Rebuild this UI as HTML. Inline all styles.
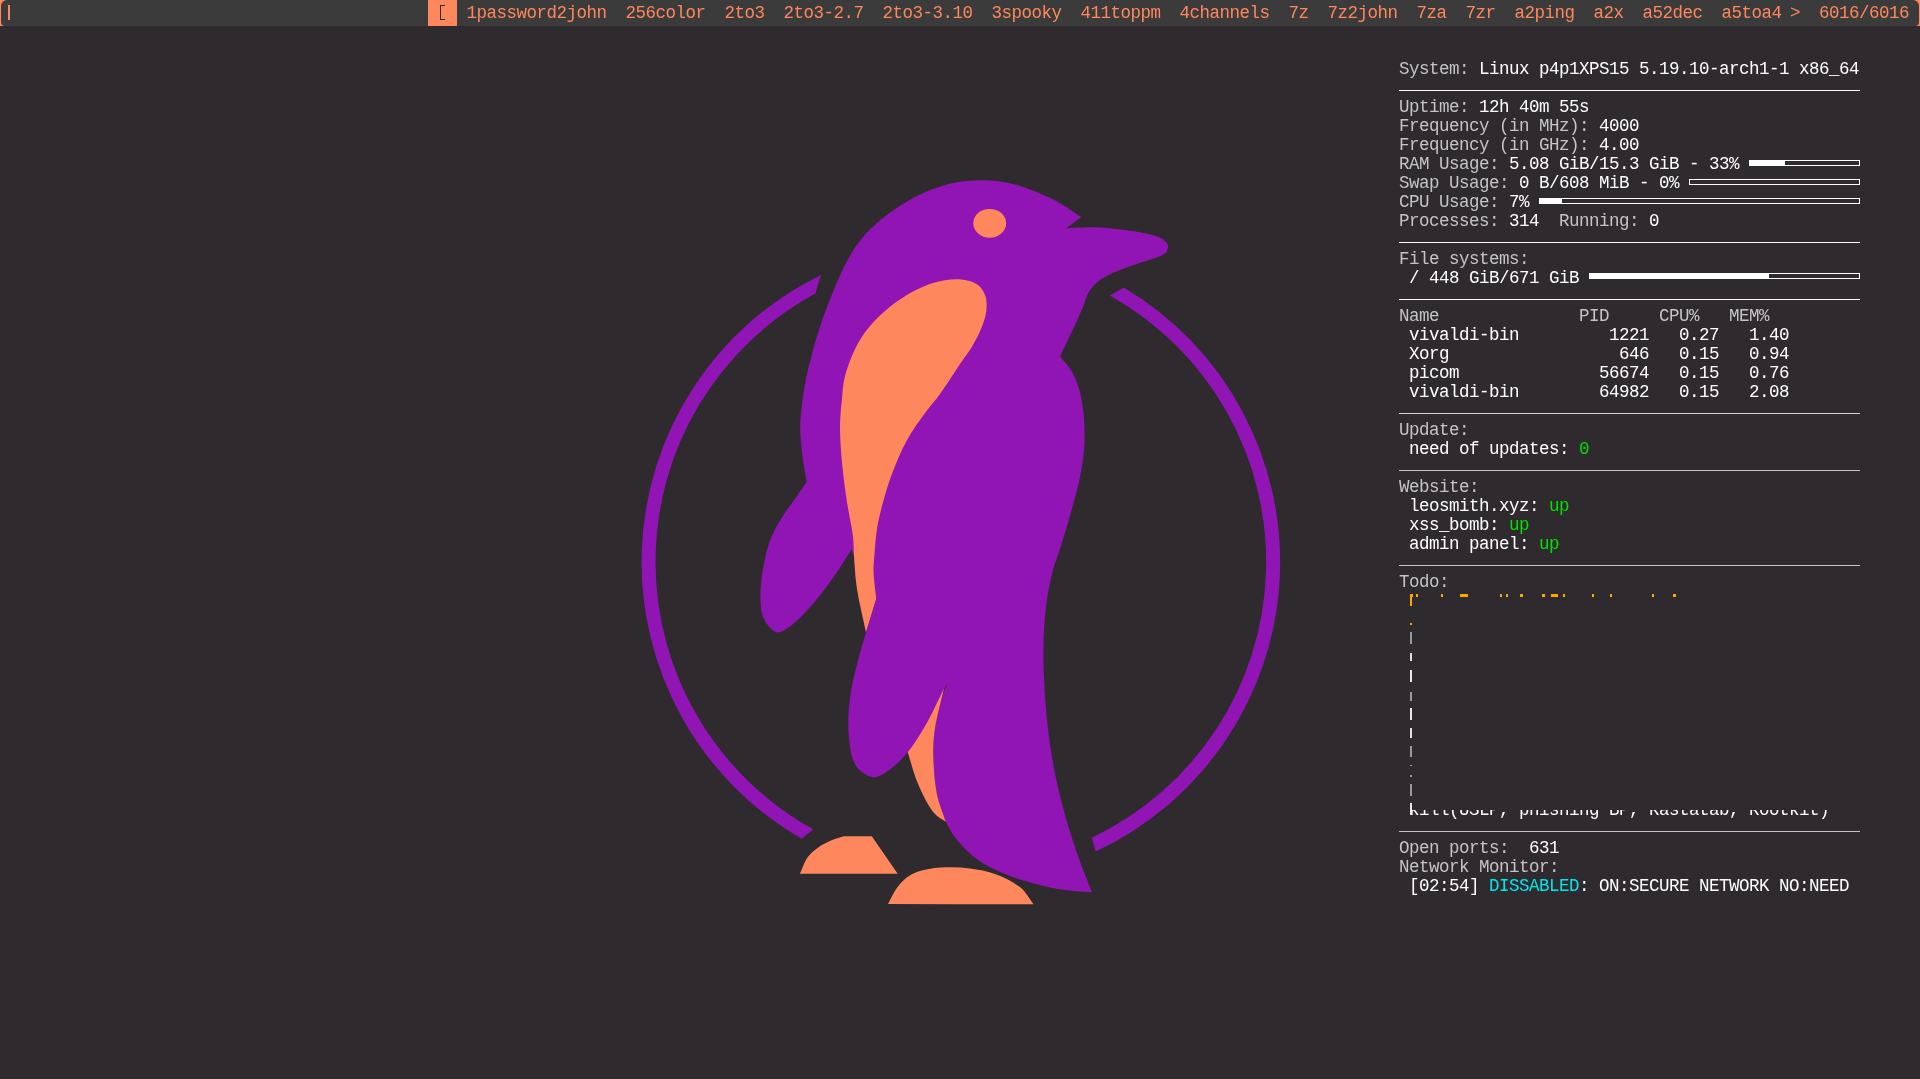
<!DOCTYPE html>
<html><head><meta charset="utf-8">
<style>
html,body{margin:0;padding:0;}
body{-webkit-font-smoothing:antialiased;width:1920px;height:1079px;background:#2e2a2e;position:relative;overflow:hidden;font-family:"Liberation Mono",monospace;}
#barbg{position:absolute;left:0;top:0;width:1920px;height:26px;background:#ff875d;}
#bar{position:absolute;left:1px;top:0;width:1918px;height:26px;background:#3b3b3b;border-radius:6px 6px 4px 4px;}
.t{position:absolute;top:3.8px;font-size:17.5px;line-height:19px;letter-spacing:-0.5px;color:#ff875d;white-space:pre;}
#sel{position:absolute;left:428px;top:0;width:29px;height:26px;background:#ff875d;}
#sel span{position:absolute;left:9.5px;top:3.8px;font-size:17.5px;line-height:19px;color:#2b2f33;}
#cur{position:absolute;left:8px;top:5px;width:2px;height:15px;background:#ff875d;}
.cl{position:absolute;font-size:17.5px;line-height:19px;letter-spacing:-0.5px;color:#ffffff;white-space:pre;}
.hr{position:absolute;left:1399px;width:461px;height:1px;}
.bar{position:absolute;height:4px;border:1px solid #fff;box-sizing:content-box;}
.barf{position:absolute;height:6px;background:#fff;}
</style></head><body>
<div id="barbg"></div><div id="bar"></div>
<div id="cur"></div>
<div style="position:absolute;left:0;top:0;width:1920px;height:26px;will-change:transform">
<div id="sel"><i style="position:absolute;left:11.5px;top:5px;width:1.8px;height:15px;background:#2a2e31"></i><i style="position:absolute;left:11.5px;top:5px;width:5.3px;height:1.4px;background:#2a2e31"></i><i style="position:absolute;left:11.5px;top:18.6px;width:5.3px;height:1.4px;background:#2a2e31"></i></div>
<span class="t" style="left:466.5px">1password2john</span>
<span class="t" style="left:625.5px">256color</span>
<span class="t" style="left:724.5px">2to3</span>
<span class="t" style="left:783.5px">2to3-2.7</span>
<span class="t" style="left:882.5px">2to3-3.10</span>
<span class="t" style="left:991.5px">3spooky</span>
<span class="t" style="left:1080.5px">411toppm</span>
<span class="t" style="left:1179.5px">4channels</span>
<span class="t" style="left:1288.5px">7z</span>
<span class="t" style="left:1327.5px">7z2john</span>
<span class="t" style="left:1416.5px">7za</span>
<span class="t" style="left:1465.5px">7zr</span>
<span class="t" style="left:1514.5px">a2ping</span>
<span class="t" style="left:1593.5px">a2x</span>
<span class="t" style="left:1642.5px">a52dec</span>
<span class="t" style="left:1721.5px">a5toa4</span>
<span class="t" style="left:1790px">&gt;</span>
<span class="t" style="left:1819px">6016/6016</span>
</div>
<svg width="1920" height="1079" viewBox="0 0 1920 1079" style="position:absolute;left:0;top:0">
<path fill="#9115b4" d="M820.98,274.96 A319.30,319.30 0 0 0 801.71,838.82 L813.47,829.37 A305.30,305.30 0 0 1 815.33,293.61 Z"/>
<path fill="#9115b4" d="M1123.77,287.39 A319.30,319.30 0 0 1 1095.67,851.44 L1091.84,837.77 A305.30,305.30 0 0 0 1109.74,295.47 Z"/>
<path fill="#9115b4" d="M807.80,370.60 C811.93,353.30 818.72,327.90 827.10,306.80 C835.92,284.59 845.68,258.75 860.00,240.70 C873.14,224.14 891.10,210.94 907.90,201.10 C923.17,192.16 939.55,185.74 955.80,182.60 C971.50,179.57 987.96,179.44 1003.70,182.00 C1019.90,184.64 1037.83,192.17 1051.60,198.70 C1063.01,204.11 1071.40,210.83 1081.30,216.90 C1076.20,220.80 1071.10,224.70 1066.00,228.60 C1069.23,228.27 1071.69,227.82 1075.70,227.60 C1082.18,227.24 1092.71,226.97 1101.20,227.40 C1109.71,227.83 1118.69,229.07 1126.70,230.20 C1133.90,231.21 1141.08,232.26 1147.10,233.70 C1152.02,234.88 1156.72,235.83 1160.30,237.80 C1163.26,239.42 1166.39,241.85 1167.50,243.90 C1168.23,245.26 1168.25,246.60 1168.00,248.00 C1167.71,249.65 1166.83,251.67 1165.40,253.10 C1163.60,254.90 1160.48,255.87 1157.30,257.20 C1153.06,258.97 1147.10,260.60 1142.00,262.30 C1136.90,264.00 1131.77,265.54 1126.70,267.40 C1121.57,269.27 1116.14,271.18 1111.40,273.50 C1106.99,275.65 1102.63,277.98 1099.10,280.70 C1095.94,283.14 1093.11,286.03 1091.00,288.80 C1089.21,291.15 1088.07,293.41 1086.90,296.00 C1085.64,298.78 1085.14,301.56 1083.80,305.00 C1081.93,309.80 1079.41,315.37 1076.40,322.00 C1072.08,331.51 1065.53,345.00 1060.10,356.50 C1063.80,361.13 1068.13,365.34 1071.20,370.40 C1074.31,375.53 1076.65,380.90 1078.60,387.10 C1080.86,394.29 1082.30,403.30 1083.30,411.20 C1084.25,418.72 1084.58,425.85 1084.60,433.40 C1084.62,441.27 1084.25,449.34 1083.30,457.50 C1082.30,466.03 1080.56,474.73 1078.60,483.50 C1076.56,492.65 1073.86,501.76 1071.20,511.30 C1068.36,521.49 1065.15,532.57 1062.00,542.80 C1058.98,552.61 1055.29,561.49 1052.70,571.50 C1049.95,582.13 1047.74,592.58 1046.20,604.90 C1044.34,619.86 1043.40,637.21 1043.40,655.00 C1043.39,675.26 1045.02,700.11 1047.00,720.00 C1048.69,737.00 1050.99,752.03 1053.80,767.10 C1056.43,781.22 1059.46,794.14 1063.10,807.80 C1066.86,821.93 1071.31,836.43 1076.10,850.50 C1080.88,864.56 1086.57,878.30 1091.80,892.20 C1083.47,891.57 1075.32,891.46 1066.80,890.30 C1057.74,889.06 1048.21,887.10 1039.00,884.80 C1029.68,882.47 1020.35,879.88 1011.20,876.40 C1001.81,872.82 991.83,868.85 983.40,863.50 C975.21,858.30 967.46,851.87 961.20,844.90 C955.18,838.21 950.27,830.81 946.30,822.70 C942.14,814.21 939.24,804.96 937.10,794.90 C934.69,783.55 933.72,769.07 933.40,757.80 C933.13,748.40 933.33,741.14 934.50,731.90 C935.88,721.01 939.24,705.47 942.00,696.70 C943.73,691.21 945.67,688.03 947.50,683.70 C931.67,669.13 915.83,654.57 900.00,640.00 C888.67,637.43 877.33,634.87 866.00,632.30 C863.00,617.53 859.02,601.62 857.00,588.00 C855.30,576.52 855.00,566.67 854.00,556.00 C853.00,553.67 852.00,551.33 851.00,549.00 C840.67,542.67 830.33,536.33 820.00,530.00 C810.00,523.33 800.00,516.67 790.00,510.00 C795.57,500.70 801.13,491.40 806.70,482.10 C805.17,472.53 803.19,462.91 802.10,453.40 C801.04,444.08 800.09,434.67 800.20,425.60 C800.31,416.89 801.41,408.80 802.60,400.00 C803.88,390.51 805.04,382.18 807.80,370.60Z"/>
<path fill="#9115b4" d="M806.70,482.10 C803.00,487.37 799.45,492.43 795.60,497.90 C791.44,503.82 786.59,509.96 782.60,516.40 C778.55,522.92 774.52,529.41 771.50,536.80 C768.24,544.78 765.92,553.46 764.10,562.80 C762.05,573.34 760.11,586.83 760.40,597.00 C760.63,605.24 761.00,613.25 764.10,619.30 C766.89,624.75 772.23,631.51 777.00,632.30 C781.54,633.05 786.76,628.60 791.90,624.90 C798.97,619.81 806.96,610.83 814.10,602.60 C821.84,593.67 829.88,582.39 836.40,573.00 C842.01,564.91 846.27,557.53 851.20,549.80 C854.13,539.87 857.07,529.93 860.00,520.00 C851.67,503.33 843.33,486.67 835.00,470.00 C825.57,474.03 816.13,478.07 806.70,482.10Z"/>
<path fill="#ff875d" d="M961.30,279.40 C967.83,279.99 973.89,281.87 978.00,285.00 C981.56,287.72 983.99,291.84 985.40,296.00 C986.89,300.41 986.84,305.84 986.30,310.90 C985.71,316.36 983.76,322.00 981.60,327.60 C979.24,333.70 975.93,340.02 972.40,346.00 C968.76,352.16 964.60,357.22 960.00,364.00 C954.10,372.71 946.30,385.30 940.00,394.00 C934.90,401.05 930.42,405.67 925.40,412.60 C919.42,420.84 912.28,430.46 906.80,440.40 C901.08,450.79 896.11,462.88 892.00,473.80 C888.20,483.88 885.25,494.07 882.70,503.50 C880.43,511.91 878.57,519.24 877.20,527.60 C875.74,536.49 875.03,547.61 874.40,555.40 C873.94,561.04 873.41,564.31 873.50,570.00 C873.63,578.03 875.30,589.33 876.20,599.00 C872.80,610.10 869.40,621.20 866.00,632.30 C862.93,617.47 858.80,601.51 856.80,587.80 C855.11,576.20 854.65,564.72 854.00,555.40 C853.51,548.35 853.82,544.03 853.00,536.80 C851.84,526.52 848.44,512.08 846.60,499.70 C844.77,487.38 843.10,475.06 842.00,462.70 C840.90,450.36 839.89,436.82 840.00,425.60 C840.09,416.27 841.06,408.34 841.90,400.00 C842.71,391.99 842.58,385.12 844.90,376.50 C847.99,365.03 853.72,349.49 861.20,337.90 C868.73,326.24 878.86,315.67 890.00,306.80 C901.57,297.58 916.81,288.46 929.70,284.00 C940.47,280.28 952.51,278.61 961.30,279.40Z"/>
<path fill="#ff875d" d="M947.50,676.00 C930.00,699.00 912.50,722.00 895.00,745.00 C899.23,747.43 903.47,749.87 907.70,752.30 C911.13,762.80 913.62,773.69 918.00,783.80 C922.39,793.93 928.34,806.46 934.00,813.00 C937.76,817.34 941.80,818.87 945.70,821.80 C942.83,812.83 939.13,804.70 937.10,794.90 C934.77,783.64 933.72,769.07 933.40,757.80 C933.13,748.40 933.33,741.14 934.50,731.90 C935.88,721.01 939.57,706.86 942.00,696.70 C943.87,688.86 945.67,682.90 947.50,676.00Z"/>
<path fill="#9115b4" d="M866.00,632.30 C863.53,640.93 860.96,649.11 858.60,658.20 C856.01,668.16 852.91,679.46 851.20,689.70 C849.61,699.23 848.66,708.64 848.40,717.60 C848.16,725.89 848.52,734.16 849.40,741.60 C850.18,748.17 850.85,754.86 853.00,760.00 C854.80,764.29 857.13,767.95 860.40,770.80 C863.84,773.80 868.90,777.19 873.40,777.30 C878.15,777.42 883.22,774.11 888.20,770.80 C894.62,766.53 901.61,759.61 907.70,752.30 C914.70,743.91 921.14,732.96 927.10,722.60 C933.20,711.98 940.10,695.69 943.80,689.30 C945.37,686.59 946.27,685.57 947.50,683.70 C951.67,669.13 955.83,654.57 960.00,640.00 C932.07,626.33 904.13,612.67 876.20,599.00 C872.80,610.10 869.40,621.20 866.00,632.30Z"/>
<ellipse fill="#ff875d" cx="989.7" cy="223.3" rx="16.4" ry="14.4"/>
<path fill="#ff875d" d="M799.90,873.80 C802.53,868.23 804.40,861.72 807.80,857.10 C810.87,852.93 814.93,849.72 818.90,846.90 C822.69,844.21 826.82,842.19 831.00,840.40 C835.15,838.62 839.60,837.60 843.90,836.20 C853.20,836.20 862.50,836.20 871.80,836.20 C880.43,848.73 889.07,861.27 897.70,873.80 C865.10,873.80 832.50,873.80 799.90,873.80Z"/>
<path fill="#ff875d" d="M888.00,903.90 C891.23,898.17 893.86,891.56 897.70,886.70 C901.20,882.28 905.26,878.40 909.70,875.60 C913.96,872.91 918.38,871.37 923.70,870.00 C930.24,868.32 938.67,867.46 946.30,867.20 C954.09,866.93 962.04,867.41 970.00,868.50 C978.27,869.63 986.83,870.99 995.00,874.00 C1003.68,877.20 1013.85,882.02 1020.50,887.60 C1026.18,892.37 1029.17,898.67 1033.50,904.20 C985.00,904.10 936.50,904.00 888.00,903.90Z"/>
</svg>
<div style="position:absolute;left:0;top:0;width:1920px;height:1079px;will-change:transform">
<div class="cl" style="top:60.4px;left:1399px"><span style="color:#c4c4c4">System:</span> <span style="color:#ffffff">Linux p4p1XPS15 5.19.10-arch1-1 x86_64</span></div>
<div class="cl" style="top:98.4px;left:1399px"><span style="color:#c4c4c4">Uptime:</span> <span style="color:#ffffff">12h 40m 55s</span></div>
<div class="cl" style="top:117.4px;left:1399px"><span style="color:#c4c4c4">Frequency (in MHz):</span> <span style="color:#ffffff">4000</span></div>
<div class="cl" style="top:136.4px;left:1399px"><span style="color:#c4c4c4">Frequency (in GHz):</span> <span style="color:#ffffff">4.00</span></div>
<div class="cl" style="top:155.4px;left:1399px"><span style="color:#c4c4c4">RAM Usage:</span> <span style="color:#ffffff">5.08 GiB/15.3 GiB - 33%</span></div>
<div class="cl" style="top:174.4px;left:1399px"><span style="color:#c4c4c4">Swap Usage:</span> <span style="color:#ffffff">0 B/608 MiB - 0%</span></div>
<div class="cl" style="top:193.4px;left:1399px"><span style="color:#c4c4c4">CPU Usage:</span> <span style="color:#ffffff">7%</span></div>
<div class="cl" style="top:212.4px;left:1399px"><span style="color:#c4c4c4">Processes:</span> <span style="color:#ffffff">314</span>  <span style="color:#c4c4c4">Running:</span> <span style="color:#ffffff">0</span></div>
<div class="cl" style="top:250.4px;left:1399px"><span style="color:#c4c4c4">File systems:</span></div>
<div class="cl" style="top:269.4px;left:1399px"><span style="color:#ffffff"> / 448 GiB/671 GiB</span></div>
<div class="cl" style="top:307.4px;left:1399px"><span style="color:#c4c4c4">Name              PID     CPU%   MEM%</span></div>
<div class="cl" style="top:326.4px;left:1399px"><span style="color:#ffffff"> vivaldi-bin         1221   0.27   1.40</span></div>
<div class="cl" style="top:345.4px;left:1399px"><span style="color:#ffffff"> Xorg                 646   0.15   0.94</span></div>
<div class="cl" style="top:364.4px;left:1399px"><span style="color:#ffffff"> picom              56674   0.15   0.76</span></div>
<div class="cl" style="top:383.4px;left:1399px"><span style="color:#ffffff"> vivaldi-bin        64982   0.15   2.08</span></div>
<div class="cl" style="top:421.4px;left:1399px"><span style="color:#c4c4c4">Update:</span></div>
<div class="cl" style="top:440.4px;left:1399px"><span style="color:#ffffff"> need of updates: </span><span style="color:#00e000">0</span></div>
<div class="cl" style="top:478.4px;left:1399px"><span style="color:#c4c4c4">Website:</span></div>
<div class="cl" style="top:497.4px;left:1399px"><span style="color:#ffffff"> leosmith.xyz: </span><span style="color:#00e000">up</span></div>
<div class="cl" style="top:516.4px;left:1399px"><span style="color:#ffffff"> xss_bomb: </span><span style="color:#00e000">up</span></div>
<div class="cl" style="top:535.4px;left:1399px"><span style="color:#ffffff"> admin panel: </span><span style="color:#00e000">up</span></div>
<div class="cl" style="top:573.4px;left:1399px"><span style="color:#c4c4c4">Todo:</span></div>
<div class="cl" style="top:839.4px;left:1399px"><span style="color:#c4c4c4">Open ports:</span>  <span style="color:#ffffff">631</span></div>
<div class="cl" style="top:858.4px;left:1399px"><span style="color:#c4c4c4">Network Monitor:</span></div>
<div class="cl" style="top:877.4px;left:1399px"><span style="color:#ffffff"> [02:54] </span><span style="color:#00e5ee">DISSABLED</span><span style="color:#ffffff">: ON:SECURE NETWORK NO:NEED</span></div>
<div style="position:absolute;left:1410px;top:594px;width:2.5px;height:3px;background:#ffa500"></div>
<div style="position:absolute;left:1415.5px;top:594px;width:2.5px;height:3px;background:#ffa500"></div>
<div style="position:absolute;left:1440.5px;top:594px;width:2.0px;height:3px;background:#ffa500"></div>
<div style="position:absolute;left:1460px;top:594px;width:8px;height:3px;background:#ffa500"></div>
<div style="position:absolute;left:1499.5px;top:594px;width:2.5px;height:3px;background:#ffa500"></div>
<div style="position:absolute;left:1505.5px;top:594px;width:2.5px;height:3px;background:#ffa500"></div>
<div style="position:absolute;left:1520px;top:594px;width:2.5px;height:3px;background:#ffa500"></div>
<div style="position:absolute;left:1542px;top:594px;width:3px;height:3px;background:#ffa500"></div>
<div style="position:absolute;left:1551px;top:594px;width:7px;height:3px;background:#ffa500"></div>
<div style="position:absolute;left:1562.5px;top:594px;width:2.0px;height:3px;background:#ffa500"></div>
<div style="position:absolute;left:1592px;top:594px;width:2px;height:3px;background:#ffa500"></div>
<div style="position:absolute;left:1610px;top:594px;width:2px;height:3px;background:#ffa500"></div>
<div style="position:absolute;left:1652px;top:594px;width:2px;height:3px;background:#ffa500"></div>
<div style="position:absolute;left:1673px;top:594px;width:3px;height:3px;background:#ffa500"></div>
<div style="position:absolute;left:1410px;top:594px;width:1.5px;height:12px;background:#ffa500"></div>
<div style="position:absolute;left:1410px;top:622.5px;width:1.5px;height:2.5px;background:#ffa500"></div>
<div style="position:absolute;left:1410px;top:631.7px;width:1.5px;height:12.5px;background:#9a9a9a"></div>
<div style="position:absolute;left:1410px;top:653px;width:1.5px;height:8px;background:#e0e0e0"></div>
<div style="position:absolute;left:1410px;top:670px;width:1.5px;height:11.700000000000045px;background:#e8e8e8"></div>
<div style="position:absolute;left:1410px;top:691.7px;width:1.5px;height:9.099999999999909px;background:#9a9a9a"></div>
<div style="position:absolute;left:1410px;top:707.5px;width:1.5px;height:12.5px;background:#e8e8e8"></div>
<div style="position:absolute;left:1410px;top:728px;width:1.5px;height:9.5px;background:#e0e0e0"></div>
<div style="position:absolute;left:1410px;top:745.8px;width:1.5px;height:11.700000000000045px;background:#9a9a9a"></div>
<div style="position:absolute;left:1410px;top:764.5px;width:1.5px;height:1.5px;background:#9a9a9a"></div>
<div style="position:absolute;left:1410px;top:775px;width:1.5px;height:1.5px;background:#9a9a9a"></div>
<div style="position:absolute;left:1410px;top:784px;width:1.5px;height:11.799999999999955px;background:#9a9a9a"></div>
<div style="position:absolute;left:1410px;top:803px;width:1.5px;height:12px;background:#e8e8e8"></div>
<div style="position:absolute;left:1399px;top:809.5px;width:461px;height:10px;overflow:hidden"><div class="cl" style="left:0;top:-8.1px"> kill(USLP, phishing BP, Rastatab, Rootkit)</div></div>
</div>
<div class="hr" style="top:90px;background:#fafafa"></div>
<div class="hr" style="top:242px;background:#fafafa"></div>
<div class="hr" style="top:299px;background:#fafafa"></div>
<div class="hr" style="top:413px;background:#d2d2d2"></div>
<div class="hr" style="top:470px;background:#c4c4c4"></div>
<div class="hr" style="top:565px;background:#c4c4c4"></div>
<div class="hr" style="top:831px;background:#c4c4c4"></div>
<div class="bar" style="top:160px;left:1749px;width:109px"></div><div class="barf" style="top:160px;left:1749px;width:36px"></div>
<div class="bar" style="top:179px;left:1689px;width:169px"></div><div class="barf" style="top:179px;left:1689px;width:0px"></div>
<div class="bar" style="top:198px;left:1539px;width:319px"></div><div class="barf" style="top:198px;left:1539px;width:23px"></div>
<div class="bar" style="top:273px;left:1589px;width:269px"></div><div class="barf" style="top:273px;left:1589px;width:180px"></div>
</body></html>
